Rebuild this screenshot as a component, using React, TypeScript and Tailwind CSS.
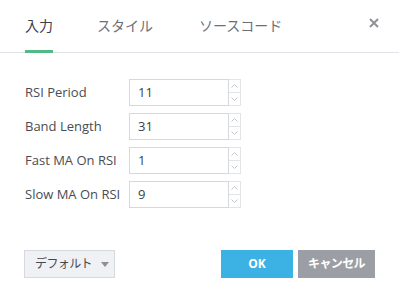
import React, { useState } from 'react';

const TABS = ['入力', 'スタイル', 'ソースコード'];

const FIELDS = [
  { label: 'RSI Period', value: '11' },
  { label: 'Band Length', value: '31' },
  { label: 'Fast MA On RSI', value: '1' },
  { label: 'Slow MA On RSI', value: '9' },
];

const FONT = "font-['Open_Sans','Noto_Sans_CJK_JP',sans-serif]";

function Spinner() {
  return (
    <div className="w-[12px] flex flex-col border border-l-0 border-[#e2e4e8]">
      <div className="flex-1 flex items-center justify-center border-b border-[#e2e4e8]">
        <svg width="7" height="4" viewBox="0 0 7 4"><path d="M0.5 3.5L3.5 0.5L6.5 3.5" fill="none" stroke="#c3c6cc" strokeWidth="1" /></svg>
      </div>
      <div className="flex-1 flex items-center justify-center">
        <svg width="7" height="4" viewBox="0 0 7 4"><path d="M0.5 0.5L3.5 3.5L6.5 0.5" fill="none" stroke="#c3c6cc" strokeWidth="1" /></svg>
      </div>
    </div>
  );
}

export default function App() {
  const [tab, setTab] = useState(0);

  return (
    <div className={`w-[399px] h-[302px] bg-white flex flex-col ${FONT}`}>

      {/* Tabs */}
      <div className="h-[53px] border-b border-[#e0e3e8] flex items-start pl-[25px] pr-[19px]">
        {TABS.map((t, i) => (
          <button
            key={t}
            onClick={() => setTab(i)}
            className={`relative h-[53px] text-[14px] pt-[15px] self-start flex items-start ${i === 0 ? 'mr-[44px]' : i === 1 ? 'mr-[46px]' : ''} ${
              tab === i ? 'text-[#3d4049]' : 'text-[#6c6f78]'
            }`}
          >
            {t}
            {tab === i && <span className="absolute left-0 right-0 top-[50px] h-[3px] bg-[#53b987]" />}
          </button>
        ))}
        <button className="ml-auto mt-[17px] w-[12px] h-[12px] flex items-center justify-center">
          <svg width="10" height="10" viewBox="0 0 10 10">
            <path d="M1 1L9 9M9 1L1 9" stroke="#8f9198" strokeWidth="2" />
          </svg>
        </button>
      </div>

      {/* Fields */}
      <div className="pt-[26px] pl-[25px] flex flex-col gap-[7px]">
        {FIELDS.map(f => (
          <div key={f.label} className="flex items-center h-[27px]">
            <span className="w-[104px] text-[13px] text-[#4a4c53]">{f.label}</span>
            <div className="flex h-[27px]">
              <div className="w-[100px] border border-[#d5d8dd] flex items-center pl-[8px] text-[13px] text-[#3c3e45]">
                {f.value}
              </div>
              <Spinner />
            </div>
          </div>
        ))}
      </div>

      {/* Footer */}
      <div className="mt-auto mb-[24px] px-[24px] flex items-center">
        <button className="h-[28px] w-[91px] shrink-0 whitespace-nowrap bg-[#f0f1f5] border border-[#d6d9de] flex items-center pl-[10px] gap-[9px] text-[12px] tracking-[-0.6px] text-[#45474e]">
          デフォルト
          <svg width="8" height="5" viewBox="0 0 8 5"><path d="M0 0H8L4 5Z" fill="#8d8f96" /></svg>
        </button>
        <button className="ml-auto h-[28px] w-[72px] bg-[#3bb2e3] text-white text-[12px] font-bold">OK</button>
        <button className="ml-[5px] h-[28px] w-[77px] whitespace-nowrap bg-[#9c9ea5] text-white text-[12px] tracking-[-0.6px] font-bold">キャンセル</button>
      </div>
    </div>
  );
}
